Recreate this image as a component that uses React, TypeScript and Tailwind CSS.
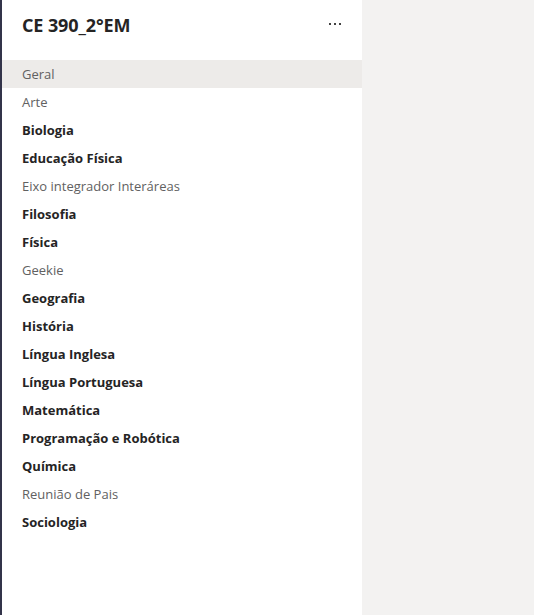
const channels: { name: string; bold: boolean }[] = [
  { name: "Geral", bold: false },
  { name: "Arte", bold: false },
  { name: "Biologia", bold: true },
  { name: "Educação Física", bold: true },
  { name: "Eixo integrador Interáreas", bold: false },
  { name: "Filosofia", bold: true },
  { name: "Física", bold: true },
  { name: "Geekie", bold: false },
  { name: "Geografia", bold: true },
  { name: "História", bold: true },
  { name: "Língua Inglesa", bold: true },
  { name: "Língua Portuguesa", bold: true },
  { name: "Matemática", bold: true },
  { name: "Programação e Robótica", bold: true },
  { name: "Química", bold: true },
  { name: "Reunião de Pais", bold: false },
  { name: "Sociologia", bold: true },
];

export default function App() {
  return (
    <div
      className="flex h-[615px] w-[534px] bg-[#f3f2f1]"
      style={{ fontFamily: '"Open Sans", "Noto Sans", sans-serif' }}
    >
      <div className="w-[2px] bg-[#33344a]" />
      <div className="flex w-[360px] flex-col bg-white">
        <div className="flex h-[60px] items-start justify-between pl-[20px] pr-[21px] pt-[12px]">
          <h1 className="text-[18px] font-bold leading-[26px] tracking-[-0.1px] text-[#252424]">
            CE 390_2°EM
          </h1>
          <button type="button" className="flex h-[24px] items-center gap-[3px]">
            <span className="h-[2px] w-[2px] bg-[#424242]" />
            <span className="h-[2px] w-[2px] bg-[#424242]" />
            <span className="h-[2px] w-[2px] bg-[#424242]" />
          </button>
        </div>
        <ul>
          {channels.map((c, i) => (
            <li
              key={c.name}
              className={`flex h-[28px] items-center pl-[20px] pt-[2px] text-[13px] ${
                i === 0 ? "bg-[#edebe9]" : ""
              } ${c.bold ? "font-bold text-[#252424]" : "text-[#616161]"}`}
            >
              {c.name}
            </li>
          ))}
        </ul>
      </div>
      <div className="flex-1" />
    </div>
  );
}
